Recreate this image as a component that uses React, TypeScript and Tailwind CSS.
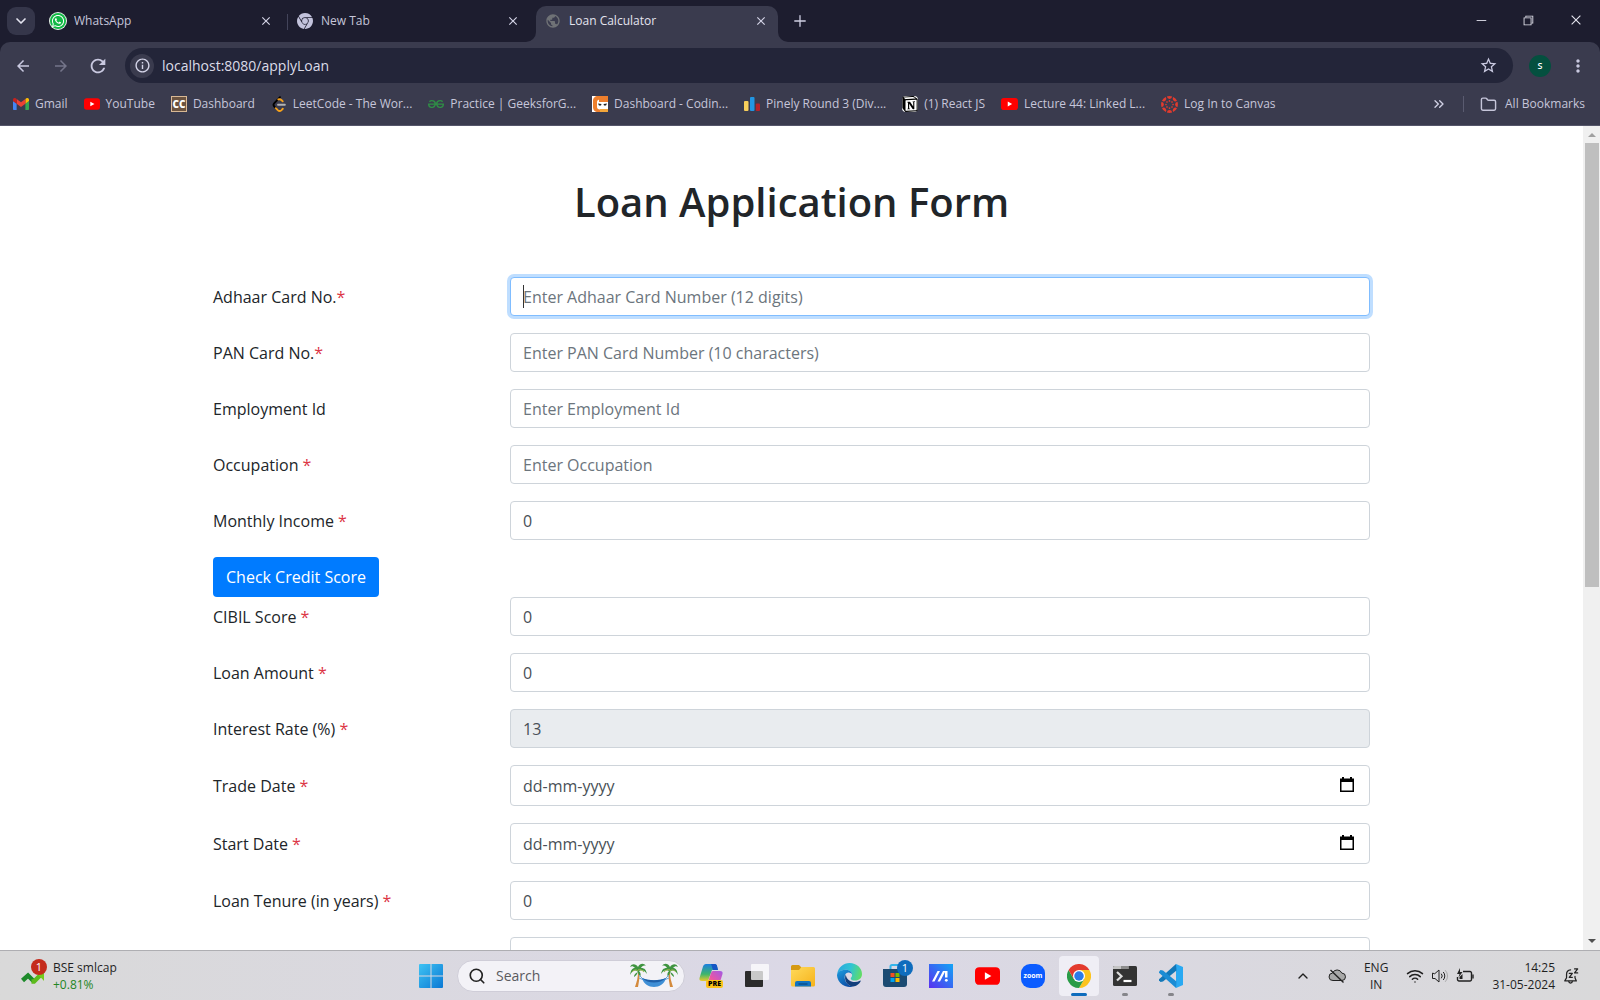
import type { ReactNode } from 'react';
import { FaWhatsapp } from 'react-icons/fa';
import { SiGooglechrome, SiGeeksforgeeks, SiNotion } from 'react-icons/si';
import {
  MdArrowBack,
  MdArrowForward,
  MdClose,
  MdInfoOutline,
  MdMoreVert,
  MdPublic,
  MdRefresh,
  MdStarBorder,
} from 'react-icons/md';
import { VscChromeClose, VscChromeMinimize, VscChromeRestore } from 'react-icons/vsc';
import { ChevronDown, ChevronUp, ChevronsRight, Folder, Plus, Search, Wifi } from 'lucide-react';

/* ---------- Logos ---------- */

function WhatsAppLogo() {
  return (
    <span className="grid size-4 shrink-0 place-items-center rounded-full bg-[#12b845] text-white ring-1 ring-[#e8f5ea]">
      <FaWhatsapp className="size-3.5" />
    </span>
  );
}

function GmailLogo() {
  return (
    <svg viewBox="52 42 88 66" className="h-3 w-4 shrink-0">
      <path fill="#4285f4" d="M58 108h14V74L52 59v43c0 3.32 2.69 6 6 6" />
      <path fill="#34a853" d="M120 108h14c3.32 0 6-2.69 6-6V59l-20 15" />
      <path fill="#fbbc04" d="M120 48v26l20-15v-8c0-7.42-8.47-11.65-14.4-7.2" />
      <path fill="#ea4335" d="M72 74V48l24 18 24-18v26L96 92" />
      <path fill="#c5221f" d="M52 51v8l20 15V48l-5.6-4.2c-5.94-4.45-14.4-.22-14.4 7.2" />
    </svg>
  );
}

function YouTubeLogo({ className }: { className: string }) {
  return (
    <svg viewBox="0 0 24 17" className={`shrink-0 ${className}`}>
      <rect width="24" height="17" rx="4" fill="#f00" />
      <path d="M9.5 5v7l6.2-3.5z" fill="#fff" />
    </svg>
  );
}

function CodeChefLogo() {
  return (
    <span className="grid size-4 shrink-0 place-items-center border border-[#d8b894] bg-[#6b5340] font-['Open_Sans',sans-serif] text-[10px] leading-none font-extrabold text-white">
      CC
    </span>
  );
}

function LeetCodeLogo() {
  return (
    <svg viewBox="0 0 24 24" className="size-4 shrink-0" fill="none" strokeLinecap="round" strokeWidth="2.8">
      <path d="M13.5 1.8 5 10.6c-1.6 1.7-1.6 3.6 0 5.3l2.2 2.3" stroke="#000" />
      <path d="m7.2 18.2 2.9 2.9c1.7 1.6 4 1.6 5.700 0l1.900-2M17.600 8l-2-2c-1.300-1.200-3-1.500-4.600-.8" stroke="#f5a11b" />
      <path d="M10.500 13.200h10.300" stroke="#b3b3b3" />
    </svg>
  );
}

function CodingNinjasLogo() {
  return (
    <svg viewBox="0 0 16 16" className="size-4 shrink-0">
      <rect width="16" height="16" fill="#fff" />
      <path d="M16 0H6C3 0 1 2 1 5v6c0 3 2 5 5 5h10v-2.500H8c-2 0-3-1-3-2.500V6c0-1.500 1-2.500 3-2.500h8z" fill="#ee7f2d" />
      <path d="M8 13h8v3H8z" fill="#f3a63a" />
      <path d="M7 3h9v3H7z" fill="#ee7f2d" />
      <path d="M6 7.500 9.500 8 9 9.500H7zM15 7.500l-3.500.5.5 1.500h2z" fill="#222" />
    </svg>
  );
}

function CodeforcesLogo() {
  return (
    <svg viewBox="0 0 16 16" className="size-4 shrink-0">
      <rect x="0" y="5" width="4.500" height="10" rx="1" fill="#f8cf5b" />
      <rect x="6" y="1" width="4.500" height="14" rx="1" fill="#2196e3" />
      <rect x="11.800" y="7.500" width="4.200" height="7.500" rx="1" fill="#b3232b" />
    </svg>
  );
}

function NotionLogo() {
  return (
    <span className="grid size-4 shrink-0 place-items-center rounded-sm bg-white text-black">
      <SiNotion className="size-4" />
    </span>
  );
}

function CanvasLogo() {
  const turns = [0, 45, 90, 135, 180, 225, 270, 315];
  return (
    <svg viewBox="0 0 24 24" className="size-[17px] shrink-0" fill="#e23b2e">
      {turns.map((turn) => (
        <g key={turn} transform={`rotate(${turn} 12 12)`}>
          <path d="M8.200.800a11.800 11.800 0 0 1 7.600 0 3.900 4.300 0 0 1-7.600 0" />
          <circle cx="12" cy="7" r="1.200" />
        </g>
      ))}
    </svg>
  );
}

function StocksLogo() {
  return (
    <svg viewBox="0 0 24 14" className="h-3.5 w-6" fill="none" strokeWidth="4.500">
      <path d="m1.500 9.500 5.500-5 6 6" stroke="#1d8a2a" />
      <path d="m10.500 10.500 2.500 0 6-6" stroke="#5dbb1c" />
      <path d="M15 1h8v9z" fill="#74cc1d" />
    </svg>
  );
}

function WindowsLogo() {
  return (
    <svg viewBox="0 0 24 24" className="size-6">
      <defs>
        <linearGradient id="win" x1="0" y1="0" x2="1" y2="1" gradientUnits="objectBoundingBox">
          <stop offset="0" stopColor="#3fc3f3" />
          <stop offset="1" stopColor="#0a78d4" />
        </linearGradient>
      </defs>
      <path d="M1 0h10.500v11.500H0V1a1 1 0 0 1 1-1M12.500 0H23a1 1 0 0 1 1 1v10.500H12.500zM0 12.500h11.500V24H1a1 1 0 0 1-1-1zM12.500 12.500H24V23a1 1 0 0 1-1 1H12.500z" fill="url(#win)" />
    </svg>
  );
}

function HammockArt() {
  const palm = (
    <>
      <path d="M8 9c0 5-1 9-3 15h3c1-6 2-10 1-15z" fill="#d48a3c" />
      <path d="M8 9C5 6 2 8 0 12c1-5 2-7 5-7C3 3 2 3 0 4c2-4 6-3 8 0 2-4 6-4 8-1-2-1-4 0-5 2 4 0 5 2 6 6-2-3-5-5-8-3 2 2 2 4 1 6-1-2-2-4-2-5-1 2-2 4-4 5 0-2 1-4 4-5" fill="#3f9440" />
      <path d="M8 8C6 6 4 7 2 9M8 7c2-1 4 0 6 2" stroke="#a3b94c" fill="none" />
    </>
  );
  return (
    <svg viewBox="0 0 48 26" className="h-[26px] w-12">
      {palm}
      <g transform="translate(48 0) scale(-1 1)">{palm}</g>
      <path d="m9 12 5 5M9 15l5 2M39 12l-5 5M39 15l-5 2" stroke="#6aa5d8" />
      <path d="M12 15c7 3 17 3 24 0-3 12-21 12-24 0" fill="#3f8fd6" />
      <path d="M12 15c7 3 17 3 24 0-6 6-18 6-24 0" fill="#1f5fa8" />
    </svg>
  );
}

function CopilotLogo() {
  return (
    <span className="relative">
      <svg viewBox="0 0 24 24" className="size-6">
        <defs>
          <linearGradient id="cpa" x1="0" y1="0" x2="0" y2="1">
            <stop offset="0" stopColor="#1a7fe0" />
            <stop offset=".6" stopColor="#3fb66b" />
            <stop offset="1" stopColor="#e9c92b" />
          </linearGradient>
          <linearGradient id="cpb" x1="1" y1="0" x2="0" y2="1">
            <stop offset="0" stopColor="#a05be6" />
            <stop offset=".6" stopColor="#e955a5" />
            <stop offset="1" stopColor="#f78d55" />
          </linearGradient>
        </defs>
        <path d="M7 0h9c1 0 2 1 2 2l1 4h-6L9 17H3c-2 0-3-1-2.500-3L4 2.500C4.500 1 5.500 0 7 0" fill="url(#cpa)" />
        <path d="M12 0h4c1 0 2 1 2 2l1 4h-5c-1-2-1-4-2-6" fill="#1656c4" />
        <path d="M14 7h7c2 0 3 1 2.500 3L20 21H8l4-12c.4-1 1-2 2-2" fill="url(#cpb)" />
      </svg>
      <span className="absolute right-0 bottom-0 rounded-xs bg-[#fcc419] px-0.5 font-['Open_Sans',sans-serif] text-[7px] leading-[8px] font-extrabold text-black">
        PRE
      </span>
    </span>
  );
}

function TaskViewLogo() {
  return (
    <svg viewBox="0 0 24 24" className="size-6">
      <rect x="0" y="7" width="18" height="16" rx="1" fill="#2b2b2b" />
      <rect x="6" y="0" width="18" height="16" rx="1" fill="#fff" opacity=".75" />
    </svg>
  );
}

function ExplorerLogo() {
  return (
    <svg viewBox="0 0 24 24" className="size-6">
      <defs>
        <linearGradient id="fol" x1="0" y1="0" x2="1" y2="1">
          <stop offset="0" stopColor="#ffda5a" />
          <stop offset="1" stopColor="#f6b21b" />
        </linearGradient>
      </defs>
      <path d="M0 2.500A1.500 1.500 0 0 1 1.500 1H8l3 3v4H0z" fill="#d69a12" />
      <path d="M0 6h8l2.500-3h12A1.500 1.500 0 0 1 24 4.500V21a1.500 1.500 0 0 1-1.500 1.500h-21A1.500 1.500 0 0 1 0 21z" fill="url(#fol)" />
      <path d="M4 22.500V19a2 2 0 0 1 2-2h12a2 2 0 0 1 2 2v3.500z" fill="#1173c1" />
      <path d="M7.500 20h9" stroke="#0b4f8a" strokeWidth="1.500" />
    </svg>
  );
}

function EdgeLogo() {
  return (
    <svg viewBox="0 0 24 24" className="size-[25px]">
      <defs>
        <linearGradient id="ea" x1="0" y1=".4" x2="1" y2=".6">
          <stop offset="0" stopColor="#2aa9dd" />
          <stop offset=".5" stopColor="#2fc4d4" />
          <stop offset="1" stopColor="#63dd62" />
        </linearGradient>
        <linearGradient id="eb" x1="0" y1="0" x2=".6" y2="1">
          <stop offset="0" stopColor="#1c9de0" />
          <stop offset="1" stopColor="#0c4ea6" />
        </linearGradient>
      </defs>
      <path d="M.2 10.500C1.200 4 6.300 0 12 0c7 0 12 5 12 10.500 0 4-3 6.300-6.500 6.300-3 0-4.300-1-4.300-2 0-.8 1.300-1.300 1.300-3.300C14.500 8.500 11.500 6.500 8 6.500c-3.500 0-6.300 1.500-7.800 4" fill="url(#ea)" />
      <path d="M0 12c0-3.500 4-5.500 8-5.500 3.500 0 6.300 2 6.500 4.500-1-1.300-2.300-2-3.700-1.800C8 9.500 7 12.500 7.500 15c.7 4 4 7 8 7.500A12 12 0 0 1 0 12" fill="url(#eb)" />
      <path d="M8.500 11C6 16 10 22.500 15.500 22.500c3 0 6-2.500 7.200-5 .2-.5-.2-.8-.7-.5-5.500 3-13 .5-13.500-6" fill="#123f7c" />
    </svg>
  );
}

function StoreLogo() {
  return (
    <span className="relative">
      <svg viewBox="0 0 24 24" className="size-6">
        <path d="M7.500 6V2.500C7.500 1.500 8 1 9 1h6c1 0 1.500.5 1.500 1.500V6" fill="none" stroke="#35b5ea" strokeWidth="2" />
        <path d="M0 5h24v15a3 3 0 0 1-3 3H3a3 3 0 0 1-3-3z" fill="#1b4a72" />
        <path d="M7.500 9h4v4h-4z" fill="#f25022" />
        <path d="M12.500 9h4v4h-4z" fill="#7fba00" />
        <path d="M7.500 14h4v4h-4z" fill="#00a4ef" />
        <path d="M12.500 14h4v4h-4z" fill="#ffb900" />
      </svg>
      <span className="absolute -top-1 -right-1.5 grid size-4 place-items-center rounded-full bg-[#0f6cbd] text-[11px] leading-none text-white">
        1
      </span>
    </span>
  );
}

function MyAsusLogo() {
  return (
    <svg viewBox="0 0 24 24" className="size-6">
      <defs>
        <linearGradient id="ma" x1="0" y1="1" x2="1" y2="0">
          <stop offset="0" stopColor="#5a2ff0" />
          <stop offset="1" stopColor="#12a5f5" />
        </linearGradient>
      </defs>
      <path d="M0 0h24v24H0z" fill="url(#ma)" />
      <path d="M3 17.500 8.500 7H11L5.500 17.500zM8.500 17.500 14 7h2.500L11 17.500zM16 7h2.500v6.500H16z" fill="#fff" />
      <circle cx="17.300" cy="16.300" r="1.400" fill="#fff" />
    </svg>
  );
}

function ZoomLogo() {
  return (
    <span className="grid size-6 place-items-center rounded-[9px] bg-[#0b5cff] font-['Open_Sans',sans-serif] text-[7px] leading-none font-bold text-white">
      zoom
    </span>
  );
}

function ChromeLogo() {
  return (
    <svg viewBox="0 0 48 48" className="size-6">
      <path d="M24 12h20.800A24 24 0 0 1 24 48l10.400-18z" fill="#fcc31e" />
      <path d="M3.200 12A24 24 0 0 0 24 48l10.400-18H13.600z" fill="#2a9c48" />
      <path d="M24 24 13.600 30 3.200 12A24 24 0 0 1 44.800 12H24z" fill="#e33b2e" />
      <circle cx="24" cy="24" r="12" fill="#fff" />
      <circle cx="24" cy="24" r="9.500" fill="#2c7bea" />
    </svg>
  );
}

function TerminalLogo() {
  return (
    <svg viewBox="0 0 24 20" className="h-5 w-6">
      <rect width="24" height="20" rx="1.500" fill="#333" />
      <path d="M1.500 0h14v3H0V1.500A1.500 1.500 0 0 1 1.500 0" fill="#c4c4c4" />
      <path d="M8 0h7.500v3H8z" fill="#8d8d8d" />
      <path d="m4 6 4.500 4.300L4 14.500" stroke="#ddd" strokeWidth="2.200" fill="none" />
      <path d="M10.500 15h8" stroke="#fff" strokeWidth="2.200" />
    </svg>
  );
}

function VsCodeLogo() {
  return (
    <svg viewBox="0 0 24 24" className="size-6">
      <path d="M17 0 24 3v18l-7 3z" fill="#29a9f2" />
      <path d="m17 0 .5 6.500L4 17.500 1.500 18 0 16.300v-1z" fill="#1277b8" />
      <path d="M17 24l.5-6.500L4 6.500 1.500 6 0 7.700v1z" fill="#1b8cd4" />
    </svg>
  );
}

function CalendarGlyph() {
  return (
    <svg viewBox="0 0 14 16" className="h-4 w-3.5">
      <path d="M2 0h2v1.500h6V0h2v1.500h2V15H0V1.500h2zM1.500 5v8.500h11V5z" fill="#000" fillRule="evenodd" />
    </svg>
  );
}

function CloudOffGlyph() {
  return (
    <svg viewBox="0 0 18 16" className="h-4 w-[18px]" fill="none" stroke="#222">
      <path d="M5 12.500a3.700 3.700 0 0 1-.5-7.400 5 5 0 0 1 9.300 0 3.700 3.700 0 0 1 0 7.400z" fill="#a8a8a8" />
      <path d="m2.500 2 13 12.500" strokeWidth="1.400" />
    </svg>
  );
}

function SpeakerGlyph() {
  return (
    <svg viewBox="0 0 18 16" className="h-4 w-[18px]" fill="none" stroke="#222" strokeLinecap="round" strokeLinejoin="round">
      <path d="M1.500 5.500v5H4l4 3.500V2L4 5.500z" />
      <path d="M10.500 6a3 3 0 0 1 0 4M12.500 4.300a5.500 5.500 0 0 1 0 7.400" />
      <path d="M14.500 2.500a8 8 0 0 1 0 11" stroke="#aaa" />
    </svg>
  );
}

function BatteryGlyph() {
  return (
    <svg viewBox="0 0 18 16" className="h-4 w-[18px]" fill="none" stroke="#222" strokeWidth="1.400">
      <path d="M7 3.500h7a1.500 1.500 0 0 1 1.500 1.500v6.500A1.500 1.500 0 0 1 14 13H3a1.500 1.500 0 0 1-1.500-1.500V9" />
      <path d="M17 7v3" strokeLinecap="round" />
      <path d="m4 0-3 6h2.500L2.500 9.500 6.500 4H4z" fill="#222" stroke="none" />
      <path d="M3.500 11V9l3-3v5z" fill="#222" stroke="none" />
    </svg>
  );
}

function SnoozeBellGlyph() {
  return (
    <svg viewBox="0 0 18 18" className="size-4" fill="none" stroke="#222" strokeWidth="1.400" strokeLinecap="round" strokeLinejoin="round">
      <path d="M8.500 2A5 5 0 0 0 4 7v4L2 14.500h13L13.500 11V9.500" />
      <path d="M6.500 15a2 2 0 0 0 4 0M7 6h3.500L7 10.500h3.500M13 1h3.500L13 5.500h3.500" />
    </svg>
  );
}

/* ---------- Browser frame ---------- */

function Tab({ icon, title, active = false }: { icon: ReactNode; title: string; active?: boolean }) {
  const shape = active
    ? 'relative rounded-t-[10px] bg-[#3a3b4e] pb-1.5 text-[#e4e4ee]'
    : 'pb-0.5 text-[#c6c6da]';
  return (
    <div className={`flex w-[242px] items-center gap-2 pr-2.5 pl-[9px] ${shape}`}>
      {active && (
        <>
          <span className="absolute bottom-0 -left-2.5 size-2.5 bg-[#3a3b4e]" />
          <span className="absolute bottom-0 -left-2.5 size-2.5 rounded-br-[10px] bg-[#1d1d2f]" />
          <span className="absolute -right-2.5 bottom-0 size-2.5 bg-[#3a3b4e]" />
          <span className="absolute -right-2.5 bottom-0 size-2.5 rounded-bl-[10px] bg-[#1d1d2f]" />
        </>
      )}
      {icon}
      <span className="flex-1 truncate">{title}</span>
      <button aria-label={`Close ${title}`} className="text-[#d4d4e6]">
        <MdClose className="size-3.5" />
      </button>
    </div>
  );
}

const bookmarks: { label: string; icon: ReactNode }[] = [
  { label: 'Gmail', icon: <GmailLogo /> },
  { label: 'YouTube', icon: <YouTubeLogo className="h-3 w-4" /> },
  { label: 'Dashboard', icon: <CodeChefLogo /> },
  { label: 'LeetCode - The Wor...', icon: <LeetCodeLogo /> },
  { label: 'Practice | GeeksforG...', icon: <SiGeeksforgeeks className="size-4 shrink-0 text-[#2f8d46]" /> },
  { label: 'Dashboard - Codin...', icon: <CodingNinjasLogo /> },
  { label: 'Pinely Round 3 (Div....', icon: <CodeforcesLogo /> },
  { label: '(1) React JS', icon: <NotionLogo /> },
  { label: 'Lecture 44: Linked L...', icon: <YouTubeLogo className="h-3 w-[17px]" /> },
  { label: 'Log In to Canvas', icon: <CanvasLogo /> },
];

function BrowserFrame() {
  return (
    <header className="shrink-0 bg-[#1d1d2f] text-[12px] text-[#c6c6da]">
      <div className="flex h-[42px] items-stretch pt-1.5">
        <button aria-label="Search tabs" className="mt-px mr-1.5 ml-[7px] grid size-7 place-items-center rounded-[9px] bg-[#35364a] text-[#e4e4f0]">
          <ChevronDown className="size-4" strokeWidth={2.5} />
        </button>
        <div className="mb-1 flex">
          <Tab icon={<WhatsAppLogo />} title="WhatsApp" />
        </div>
        <span className="my-2 ml-1 h-4 w-px bg-[#43445a]" />
        <div className="mb-1 flex">
          <Tab icon={<SiGooglechrome className="size-4 shrink-0 text-[#c3c3dc]" />} title="New Tab" />
        </div>
        <div className="ml-1.5 flex">
          <Tab active icon={<MdPublic className="size-4 shrink-0 text-[#6f7276]" />} title="Loan Calculator" />
        </div>
        <button aria-label="New tab" className="mb-1.5 ml-3 px-px text-[#d0d0e4]">
          <Plus className="size-[18px]" strokeWidth={1.700} />
        </button>
        <div className="mb-2 ml-auto flex items-center text-[#e6e6f0]">
          <button aria-label="Minimize" className="grid w-[46px] place-items-center">
            <VscChromeMinimize className="size-3.5" />
          </button>
          <button aria-label="Restore" className="grid w-12 place-items-center">
            <VscChromeRestore className="size-3.5" />
          </button>
          <button aria-label="Close window" className="grid w-12 place-items-center">
            <VscChromeClose className="size-3.5" />
          </button>
        </div>
      </div>

      <div className="rounded-t-[10px] border-b border-[#55566a] bg-[#3a3b4e]">
        <div className="flex items-center pt-1.5 pr-3 pl-3">
          <button aria-label="Back" className="text-[#c9c9e0]">
            <MdArrowBack className="size-[22px] p-0.5" />
          </button>
          <button aria-label="Forward" className="ml-4 text-[#74758a]">
            <MdArrowForward className="size-[22px] p-0.5" />
          </button>
          <button aria-label="Reload" className="ml-[15px] text-[#c9c9e0]">
            <MdRefresh className="size-[22px]" />
          </button>
          <div className="ml-4 flex h-[35px] flex-1 items-center gap-2 rounded-full bg-[#232539] pr-[15px] pl-[5px]">
            <button aria-label="Site information" className="grid size-6 place-items-center rounded-full bg-[#3a3b4e] text-[#d4d4e8]">
              <MdInfoOutline className="size-[17px]" />
            </button>
            <input
              aria-label="Address"
              className="flex-1 bg-transparent text-[14px] text-[#dcdce8] outline-none"
              defaultValue="localhost:8080/applyLoan"
            />
            <button aria-label="Bookmark this page" className="text-[#c9c9e0]">
              <MdStarBorder className="size-[19px]" />
            </button>
          </div>
          <button aria-label="Profile" className="ml-4 grid size-[22px] place-items-center rounded-full bg-[#04503f] text-[9px] leading-none font-semibold text-white">
            S
          </button>
          <button aria-label="Browser menu" className="ml-[17px] text-[#c9c9e0]">
            <MdMoreVert className="size-5" />
          </button>
        </div>
        <nav className="flex h-[42px] items-center gap-4 pr-[15px] pl-[13px]">
          {bookmarks.map((bookmark, index) => (
            <a key={index} href="#" className="flex items-center gap-1.5 whitespace-nowrap">
              {bookmark.icon}
              {bookmark.label}
            </a>
          ))}
          <button aria-label="More bookmarks" className="ml-auto text-[#d0d0e4]">
            <ChevronsRight className="size-4" />
          </button>
          <span className="h-4 w-px bg-[#5a5b70]" />
          <a href="#" className="flex items-center gap-2 whitespace-nowrap">
            <Folder className="size-[17px]" />
            All Bookmarks
          </a>
        </nav>
      </div>
    </header>
  );
}

/* ---------- Loan form ---------- */

type Kind = 'text' | 'number' | 'date' | 'fixed';

interface FieldSpec {
  id: string;
  label: string;
  mark?: string;
  kind: Kind;
  placeholder?: string;
  value?: string;
  focused?: boolean;
}

const applicantFields: FieldSpec[] = [
  { id: 'adhaar', label: 'Adhaar Card No.', mark: '*', kind: 'text', placeholder: 'Enter Adhaar Card Number (12 digits)', focused: true },
  { id: 'pan', label: 'PAN Card No.', mark: '*', kind: 'text', placeholder: 'Enter PAN Card Number (10 characters)' },
  { id: 'employment', label: 'Employment Id', kind: 'text', placeholder: 'Enter Employment Id' },
  { id: 'occupation', label: 'Occupation', mark: ' *', kind: 'text', placeholder: 'Enter Occupation' },
  { id: 'income', label: 'Monthly Income', mark: ' *', kind: 'number', value: '0' },
];

const loanFields: FieldSpec[] = [
  { id: 'cibil', label: 'CIBIL Score', mark: ' *', kind: 'number', value: '0' },
  { id: 'amount', label: 'Loan Amount', mark: ' *', kind: 'number', value: '0' },
  { id: 'rate', label: 'Interest Rate (%)', mark: ' *', kind: 'fixed', value: '13' },
  { id: 'trade', label: 'Trade Date', mark: ' *', kind: 'date', placeholder: 'dd-mm-yyyy' },
  { id: 'start', label: 'Start Date', mark: ' *', kind: 'date', placeholder: 'dd-mm-yyyy' },
  { id: 'tenure', label: 'Loan Tenure (in years)', mark: ' *', kind: 'number', value: '0' },
];

const inputBase = 'w-full rounded-[4px] border px-3 text-[#495057] outline-none';

function Field({ field }: { field: FieldSpec }) {
  const isDate = field.kind === 'date';
  const height = isDate ? 'h-[41px]' : 'h-[39px]';
  const frame = field.focused
    ? 'border-[#80bdff] ring-3 ring-[#bfdeff] placeholder:text-[#6c757d]'
    : isDate
      ? 'border-[#ced4da] placeholder:text-[#495057]'
      : 'border-[#ced4da] placeholder:text-[#6c757d]';
  return (
    <div className="mb-[17px] flex items-center">
      <label htmlFor={field.id} className="w-[297px] shrink-0 text-[#212529]">
        {field.label}
        {field.mark && <span className="whitespace-pre text-[#dc3545]">{field.mark}</span>}
      </label>
      <div className="relative flex-1">
        <input
          id={field.id}
          type={field.kind === 'number' ? 'number' : 'text'}
          placeholder={field.placeholder}
          defaultValue={field.value}
          readOnly={field.kind === 'fixed'}
          className={`block ${inputBase} ${height} ${frame} ${field.kind === 'fixed' ? 'bg-[#e9ecef]' : 'bg-white'}`}
        />
        {field.focused && <span className="absolute top-2 left-[13px] h-[23px] w-px bg-[#333]" />}
        {isDate && (
          <button type="button" aria-label={`Pick ${field.label}`} className="absolute top-3 right-4">
            <CalendarGlyph />
          </button>
        )}
      </div>
    </div>
  );
}

function LoanForm() {
  return (
    <form className="mx-auto max-w-[1157px] pt-[51px] text-[16px]">
      <h1 className="mb-[50px] text-center text-[40px] leading-[50px] font-semibold text-[#212529]">
        Loan Application Form
      </h1>
      {applicantFields.map((field) => (
        <Field key={field.id} field={field} />
      ))}
      <button type="button" className="block h-10 rounded-[4px] bg-[#007bff] px-[13px] text-white">
        Check Credit Score
      </button>
      {loanFields.map((field) => (
        <Field key={field.id} field={field} />
      ))}
      <div className="ml-[297px]">
        <input aria-label="Installment" className={`block ${inputBase} h-[39px] border-[#ced4da] bg-white`} />
      </div>
    </form>
  );
}

function Scrollbar() {
  return (
    <div className="flex w-[17px] shrink-0 flex-col items-center justify-between bg-[#f0f0f0]">
      <div className="flex h-[56%] w-full flex-col items-center">
        <span className="grid h-[17px] shrink-0 place-items-center">
          <span className="size-0 border-x-4 border-b-4 border-x-transparent border-b-[#a0a0a0]" />
        </span>
        <span className="w-3.5 flex-1 bg-[#bfbfbf]" />
      </div>
      <span className="grid h-[19px] place-items-center">
        <span className="size-0 border-x-4 border-t-4 border-x-transparent border-t-[#505050]" />
      </span>
    </div>
  );
}

/* ---------- Taskbar ---------- */

const apps: { name: string; logo: ReactNode; state?: 'active' | 'open' }[] = [
  { name: 'Copilot', logo: <CopilotLogo /> },
  { name: 'Task view', logo: <TaskViewLogo /> },
  { name: 'File Explorer', logo: <ExplorerLogo /> },
  { name: 'Edge', logo: <EdgeLogo /> },
  { name: 'Store', logo: <StoreLogo /> },
  { name: 'MyASUS', logo: <MyAsusLogo /> },
  { name: 'YouTube app', logo: <YouTubeLogo className="h-[18px] w-[25px]" /> },
  { name: 'Zoom', logo: <ZoomLogo /> },
  { name: 'Chrome', logo: <ChromeLogo />, state: 'active' },
  { name: 'Terminal', logo: <TerminalLogo />, state: 'open' },
  { name: 'Visual Studio Code', logo: <VsCodeLogo />, state: 'open' },
];

function Taskbar() {
  return (
    <footer className="grid h-[50px] shrink-0 grid-cols-[1fr_auto_1fr] items-center border-t border-[#aeaeb2] bg-linear-to-r from-[#d9d9d9] via-[#dbd8e6] to-[#d9d9da] px-[21px] text-[12px] leading-[17px] text-[#1f1f1f]">
      <button className="flex items-center text-left">
        <span className="relative mr-2 pt-1">
          <StocksLogo />
          <span className="absolute -top-2 left-2.5 grid size-4 place-items-center rounded-full bg-[#c42b1c] text-[11px] leading-none text-white">
            1
          </span>
        </span>
        <span>
          <span className="block">BSE smlcap</span>
          <span className="block text-[#23861f]">+0.81%</span>
        </span>
      </button>

      <div className="ml-2.5 flex items-center">
        <button aria-label="Start">
          <WindowsLogo />
        </button>
        <label className="mr-1.5 ml-3.5 flex h-8 w-[228px] items-center rounded-full border border-[#cfcdd8] bg-[#f3f2f7] pr-1.5 pl-2.5">
          <Search className="size-[18px] text-[#222]" strokeWidth={2.200} />
          <input
            aria-label="Search"
            placeholder="Search"
            className="ml-2.5 w-0 flex-1 bg-transparent text-[14px] outline-none placeholder:text-[#5a5a5e]"
          />
          <HammockArt />
        </label>
        <div className="flex gap-1.5">
          {apps.map((app) => (
            <button
              key={app.name}
              aria-label={app.name}
              className={`relative grid size-10 place-items-center rounded-[4px] ${app.state === 'active' ? 'bg-[#efeef5]' : ''}`}
            >
              {app.logo}
              {app.state === 'active' && (
                <span className="absolute bottom-0 left-3 h-[3px] w-4 rounded-full bg-[#0f6cbd]" />
              )}
              {app.state === 'open' && (
                <span className="absolute bottom-0 left-[17px] h-[3px] w-1.5 rounded-full bg-[#85858a]" />
              )}
            </button>
          ))}
        </div>
      </div>

      <div className="flex items-center justify-end">
        <button aria-label="Show hidden icons">
          <ChevronUp className="size-4" />
        </button>
        <span className="ml-[17px]">
          <CloudOffGlyph />
        </span>
        <button className="ml-[18px] text-center">
          <span className="block">ENG</span>
          <span className="block">IN</span>
        </button>
        <button aria-label="Network, volume and battery" className="ml-[18px] flex items-center gap-[7px]">
          <Wifi className="size-[18px]" strokeWidth={2} />
          <SpeakerGlyph />
          <BatteryGlyph />
        </button>
        <button className="ml-[18px] text-right whitespace-nowrap">
          <span className="block">14:25</span>
          <span className="block">31-05-2024</span>
        </button>
        <button aria-label="Notifications" className="ml-2">
          <SnoozeBellGlyph />
        </button>
      </div>
    </footer>
  );
}

export default function App() {
  return (
    <div className="flex h-screen flex-col overflow-hidden bg-white font-['Open_Sans','Noto_Sans',sans-serif]">
      <BrowserFrame />
      <div className="flex min-h-0 flex-1">
        <main className="min-w-0 flex-1 overflow-hidden">
          <LoanForm />
        </main>
        <Scrollbar />
      </div>
      <Taskbar />
    </div>
  );
}
